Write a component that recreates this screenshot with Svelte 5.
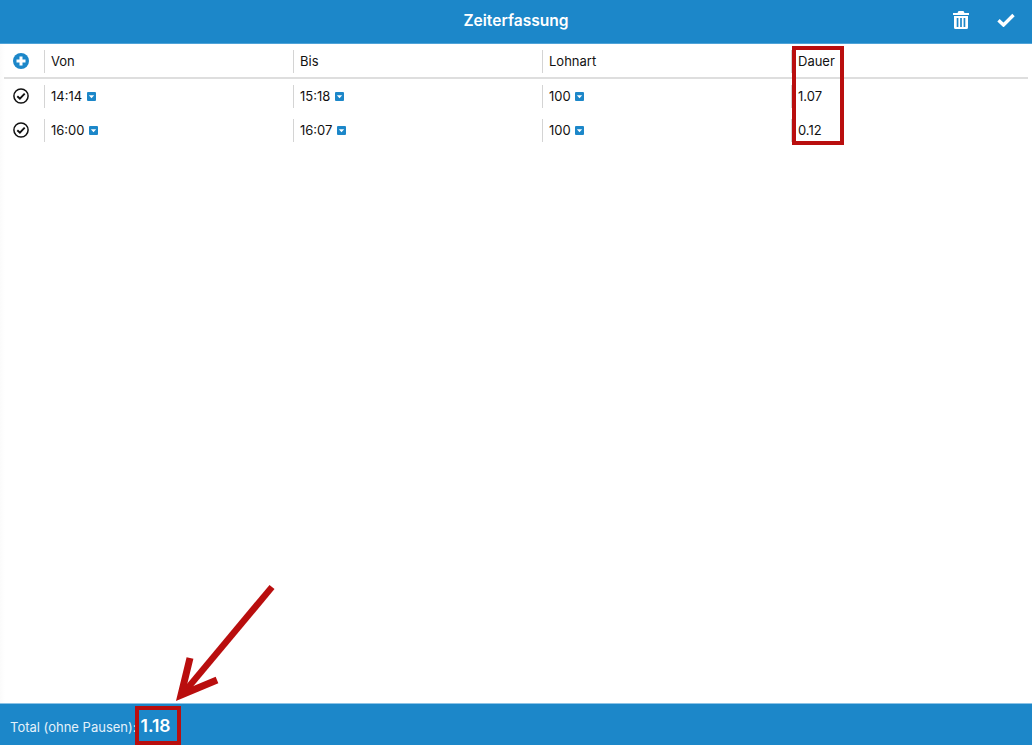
<script>
  const columns = ['Von', 'Bis', 'Lohnart', 'Dauer'];
  const rows = [
    { von: '14:14', bis: '15:18', lohnart: '100', dauer: '1.07' },
    { von: '16:00', bis: '16:07', lohnart: '100', dauer: '0.12' }
  ];
</script>

{#snippet caret()}
  <svg class="caret" viewBox="0 0 9 9" width="9" height="9" aria-hidden="true">
    <rect width="9" height="9" rx="1" fill="#1c87c9" />
    <path d="M1.800 3.200h5.400L4.500 6.200z" fill="#fff" />
  </svg>
{/snippet}

{#snippet checkCircle()}
  <svg viewBox="0 0 16 16" width="16" height="16" aria-hidden="true">
    <circle cx="8" cy="8" r="7.100" fill="none" stroke="#111" stroke-width="1.500" />
    <path d="M4.300 8.200l2.600 2.500 4.800-5" fill="none" stroke="#111" stroke-width="1.900" />
  </svg>
{/snippet}

<div class="screen">
  <header class="topbar">
    <h1>Zeiterfassung</h1>
    <div class="actions">
      <svg viewBox="0 0 16 18" width="16" height="18" aria-hidden="true">
        <path
          fill="#fff"
          fill-rule="evenodd"
          d="M5.500 0h5l1 2H16v2H0V2h4.500zM1 5h14v11.500a1.500 1.500 0 0 1-1.500 1.500h-11A1.500 1.500 0 0 1 1 16.500zM3.700 7v9h1.700V7zM7.150 7v9h1.700V7zM10.600 7v9h1.700V7z"
        />
      </svg>
      <svg viewBox="0 0 18 14" width="18" height="14" aria-hidden="true">
        <path d="M1.500 7.200l5 4.800L16.500 2" fill="none" stroke="#fff" stroke-width="3.400" />
      </svg>
    </div>
  </header>

  <main class="content">
    <div class="row head">
      <div class="lead">
        <svg viewBox="0 0 16 16" width="16" height="16" aria-hidden="true">
          <circle cx="8" cy="8" r="8" fill="#1c87c9" />
          <path d="M8 3.500v9M3.500 8h9" stroke="#fff" stroke-width="3" />
        </svg>
      </div>
      {#each columns as col}
        <div class="cell">{col}</div>
      {/each}
    </div>
    {#each rows as row}
      <div class="row">
        <div class="lead">{@render checkCircle()}</div>
        <div class="cell">{row.von} {@render caret()}</div>
        <div class="cell">{row.bis} {@render caret()}</div>
        <div class="cell">{row.lohnart} {@render caret()}</div>
        <div class="cell">{row.dauer}</div>
      </div>
    {/each}
  </main>

  <footer class="totals">
    <span class="label">Total (ohne Pausen):</span>
    <strong>1.18</strong>
  </footer>

  <!-- red annotations lying over the screenshot -->
  <div class="mark mark-dauer"></div>
  <div class="mark mark-total"></div>
  <svg class="arrow" viewBox="0 0 110 130" width="110" height="130" aria-hidden="true">
    <path d="M102 7L16 110" fill="none" stroke="#b90e0e" stroke-width="6.500" />
    <path d="M20 78L11 115L47 100" fill="none" stroke="#b90e0e" stroke-width="7" stroke-miterlimit="10" />
  </svg>
</div>

<style>
  :global(body) {
    background: #fff;
  }

  .screen {
    position: relative;
    display: flex;
    flex-direction: column;
    height: 745px;
    overflow: hidden;
    font-family: Inter, "Liberation Sans", sans-serif;
    color: #111;
    background: #fff;
  }

  .topbar {
    position: relative;
    flex: none;
    height: 41px;
    padding-bottom: 2px;
    display: flex;
    align-items: center;
    justify-content: center;
    background: #1c87c9;
    border-bottom: 1px solid #4fa3d8;
  }

  h1 {
    margin: 0;
    font-size: 15.600px;
    font-weight: 600;
    color: #fff;
  }

  .actions {
    position: absolute;
    top: 11px;
    right: 17px;
    display: flex;
    align-items: center;
    gap: 28px;
  }

  .content {
    flex: 1;
    padding: 0 4px;
    background: linear-gradient(90deg, #fbfbfb, #fff 5px);
  }

  .row {
    display: grid;
    grid-template-columns: 40px 249px 249px 249px 1fr;
    align-items: center;
    height: 34px;
    font-size: 13px;
  }

  .row.head {
    box-sizing: border-box;
    height: 35px;
    padding-top: 1px;
    border-bottom: 2px solid #dedede;
  }

  .lead {
    display: flex;
    align-items: center;
    padding-left: 9px;
  }

  .cell {
    height: 23px;
    line-height: 23px;
    padding-left: 6px;
    border-left: 1px solid #d4d4d4;
    white-space: nowrap;
  }

  .caret {
    vertical-align: 0;
    margin-left: 1px;
  }

  .totals {
    flex: none;
    box-sizing: border-box;
    height: 42px;
    padding: 4px 0 0 10px;
    display: flex;
    align-items: center;
    gap: 4px;
    background: #1c87c9;
    border-top: 1px solid #8cc3e6;
    color: #fff;
  }

  .label {
    font-size: 13px;
    color: #e4f1fa;
  }

  .totals strong {
    font-size: 17.500px;
    font-weight: 600;
    margin-top: -2px;
  }

  .mark {
    position: absolute;
    box-sizing: border-box;
    border: 4px solid #b90e0e;
  }

  .mark-dauer {
    left: 792px;
    top: 46px;
    width: 52px;
    height: 99px;
  }

  .mark-total {
    left: 135px;
    top: 706px;
    width: 46px;
    height: 39px;
  }

  .arrow {
    position: absolute;
    left: 170px;
    top: 580px;
  }
</style>
